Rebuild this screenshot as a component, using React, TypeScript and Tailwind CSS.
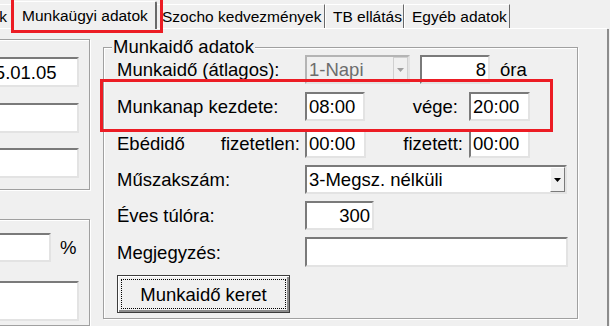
import type { ReactNode } from 'react';

// sunken Windows-style edit box
function Edit({ className = '', right = false, children }: { className?: string; right?: boolean; children?: ReactNode }) {
  return (
    <div
      className={`h-full bg-white border-2 border-t-[#7a7a7a] border-l-[#7a7a7a] border-b-[#e3e3e3] border-r-[#e3e3e3] flex items-center px-[2px] whitespace-nowrap overflow-hidden ${right ? 'justify-end' : ''} ${className}`}
    >
      {children}
    </div>
  );
}

function Combo({ className = '', disabled = false, children }: { className?: string; disabled?: boolean; children: ReactNode }) {
  return (
    <div
      className={`h-full flex border-2 ${
        disabled
          ? 'bg-[#f0f0f0] border-t-[#b4b4b4] border-l-[#b4b4b4] border-b-[#e3e3e3] border-r-[#e3e3e3] text-[#6d6d6d]'
          : 'bg-white border-t-[#7a7a7a] border-l-[#7a7a7a] border-b-[#e3e3e3] border-r-[#e3e3e3]'
      } ${className}`}
    >
      <div className="flex-1 flex items-center pl-[2px] whitespace-nowrap overflow-hidden">{children}</div>
      <div
        className={`w-[15px] h-full flex items-center justify-center bg-[#f0f0f0] border ${
          disabled ? 'border-[#d0d0d0]' : 'border-t-white border-l-white border-b-[#7a7a7a] border-r-[#7a7a7a]'
        }`}
      >
        <svg width="7" height="4" viewBox="0 0 7 4">
          <path d="M0 0h7L3.5 4z" fill={disabled ? '#a0a0a0' : '#000'} />
        </svg>
      </div>
    </div>
  );
}

const groupBox = 'border border-[#a0a0a0] shadow-[1px_1px_0_#fff,inset_1px_1px_0_#fff]';

export default function App() {
  return (
    <div className="relative w-[610px] h-[326px] overflow-hidden bg-[#f0f0f0] text-black font-['Liberation_Sans',Arial,sans-serif] text-[18.5px] leading-[21px]">
      {/* tab strip */}
      <div className="flex items-end h-[29px] border-b border-white text-[15.5px] mr-[3px]">
        <div className="w-[13px] h-[24px] flex items-center justify-end pr-[5px] border-t border-white border-r border-r-[#696969]">k</div>
        <div className="relative z-10 -mb-px w-[144px] h-[28px] flex items-center pl-[8px] bg-[#f0f0f0] border-l border-t border-white border-r-2 border-r-[#696969] rounded-t-[2px]">
          Munkaügyi adatok
        </div>
        <div className="w-[168px] h-[24px] flex items-center pl-[5px] border-t border-white border-r border-r-[#696969]">
          Szocho kedvezmények
        </div>
        <div className="w-[79px] h-[24px] flex items-center pl-[7px] border-l border-t border-white border-r border-r-[#696969]">
          TB ellátás
        </div>
        <div className="w-[106px] h-[24px] flex items-center pl-[7px] border-l border-t border-white border-r border-r-[#696969]">
          Egyéb adatok
        </div>
      </div>

      {/* tab page */}
      <div className="flex h-[297px]">
        {/* left column, cut off by the window */}
        <div className="ml-[-50px] w-[140px] flex flex-col">
          <div className={`mt-[10px] h-[169px] flex flex-col ${groupBox}`}>
            <Edit className="ml-[9px] mt-[17px] w-[119px] !h-[30px]">2025.01.05</Edit>
            <Edit className="ml-[9px] mt-[16px] w-[119px] !h-[30px]" />
            <Edit className="ml-[9px] mt-[15px] w-[119px] !h-[30px]" />
          </div>
          <div className={`mt-[29px] h-[120px] flex flex-col ${groupBox}`}>
            <div className="ml-[9px] mt-[13px] h-[29px] flex items-center">
              <Edit className="w-[91px]" />
              <span className="ml-[9px]">%</span>
            </div>
            <Edit className="ml-[9px] mt-[19px] w-[119px] !h-[40px]" />
          </div>
        </div>

        {/* Munkaidő adatok */}
        <div className={`relative ml-[13px] mt-[18px] w-[475px] h-[272px] flex flex-col pl-[13px] ${groupBox}`}>
          <span className="absolute left-[8px] top-[-12px] px-[1px] bg-[#f0f0f0]">Munkaidő adatok</span>

          <div className="mt-[7px] h-[29px] flex items-center">
            <span className="w-[188px]">Munkaidő (átlagos):</span>
            <Combo disabled className="w-[105px]">1-Napi</Combo>
            <Edit right className="ml-[10px] w-[70px]">8</Edit>
            <span className="ml-[10px]">óra</span>
          </div>

          <div className="mt-[8px] h-[29px] flex items-center">
            <span className="w-[188px]">Munkanap kezdete:</span>
            <Edit className="w-[60px]">08:00</Edit>
            <span className="w-[104px] text-right pr-[11px]">vége:</span>
            <Edit className="w-[61px]">20:00</Edit>
          </div>

          <div className="mt-[8px] h-[29px] flex items-center">
            <div className="w-[188px] flex justify-between pr-[5px]">
              <span>Ebédidő</span>
              <span>fizetetlen:</span>
            </div>
            <Edit className="w-[61px]">00:00</Edit>
            <span className="w-[103px] text-right pr-[6px]">fizetett:</span>
            <Edit className="w-[61px]">00:00</Edit>
          </div>

          <div className="mt-[7px] h-[29px] flex items-center">
            <span className="w-[188px]">Műszakszám:</span>
            <Combo className="w-[262px]">3-Megsz. nélküli</Combo>
          </div>

          <div className="mt-[7px] h-[29px] flex items-center">
            <span className="w-[188px]">Éves túlóra:</span>
            <Edit right className="w-[69px]">300</Edit>
          </div>

          <div className="mt-[7px] h-[30px] flex items-center">
            <span className="w-[188px]">Megjegyzés:</span>
            <Edit className="w-[263px]" />
          </div>

          <button className="mt-[8px] w-[173px] h-[38px] p-[3px] bg-[#f0f0f0] border border-[#3c3c3c] shadow-[inset_1px_1px_0_#fff,inset_-2px_-2px_0_#8c8c8c]">
            <div className="h-full flex items-center justify-center border border-dotted border-black">Munkaidő keret</div>
          </button>
        </div>

        <div className="flex-1" />
        <div className="w-[3px] border-l-2 border-[#8c8c8c]" />
      </div>

      {/* red highlight frames */}
      <div className="absolute left-[11px] top-[-3px] w-[152px] h-[36px] border-[3px] border-[#ec1c24] z-20" />
      <div className="absolute left-[100px] top-[79px] w-[453px] h-[53px] border-[3px] border-[#ec1c24] z-20" />
    </div>
  );
}
